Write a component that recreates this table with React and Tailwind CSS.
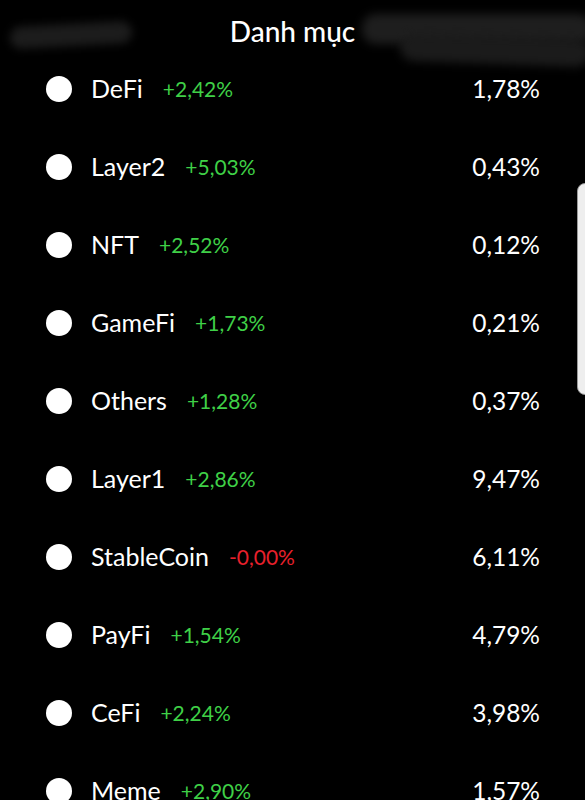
const ROWS = [
  { name: "DeFi", change: "+2,42%", share: "1,78%" },
  { name: "Layer2", change: "+5,03%", share: "0,43%" },
  { name: "NFT", change: "+2,52%", share: "0,12%" },
  { name: "GameFi", change: "+1,73%", share: "0,21%" },
  { name: "Others", change: "+1,28%", share: "0,37%" },
  { name: "Layer1", change: "+2,86%", share: "9,47%" },
  { name: "StableCoin", change: "-0,00%", share: "6,11%" },
  { name: "PayFi", change: "+1,54%", share: "4,79%" },
  { name: "CeFi", change: "+2,24%", share: "3,98%" },
  { name: "Meme", change: "+2,90%", share: "1,57%" },
];

function Row({ r }) {
  const down = r.change.startsWith("-");
  return (
    <div className="h-[78px] shrink-0 flex items-center pl-[46px] pr-[45px]">
      <span className="w-[26px] h-[26px] rounded-full bg-white shrink-0" />
      <span className="ml-[19px] text-[25px] text-white">{r.name}</span>
      <span
        className={`ml-[20px] text-[21px] ${down ? "text-[#e8202c]" : "text-[#3fd047]"}`}
      >
        {r.change}
      </span>
      <span className="ml-auto text-[24.5px] text-white">{r.share}</span>
    </div>
  );
}

export default function App() {
  return (
    <div
      className="relative w-[585px] h-[800px] overflow-hidden bg-black flex flex-col"
      style={{ fontFamily: "Lato, 'Open Sans', sans-serif" }}
    >
      {/* redacted smudges */}
      <div className="absolute left-[10px] top-[24px] w-[122px] h-[22px] bg-[#1c1c1c] rounded-full blur-[4px] -rotate-3" />
      <div className="absolute left-[362px] top-[14px] w-[230px] h-[30px] bg-[#1e1e1e] rounded-[14px] blur-[5px]" />
      <div className="absolute left-[400px] top-[36px] w-[190px] h-[28px] bg-[#1b1b1b] rounded-[14px] blur-[5px] rotate-2" />

      <div className="relative h-[50px] shrink-0 flex items-center justify-center pt-[12px]">
        <h1 className="text-[28px] font-medium text-white">Danh mục</h1>
      </div>
      <div className="flex flex-col">
        {ROWS.map((r) => (
          <Row key={r.name} r={r} />
        ))}
      </div>

      {/* side handle */}
      <div className="absolute left-[577px] top-[183px] w-[20px] h-[212px] rounded-[8px] bg-[#eeeeee] border border-[#999]" />
    </div>
  );
}
